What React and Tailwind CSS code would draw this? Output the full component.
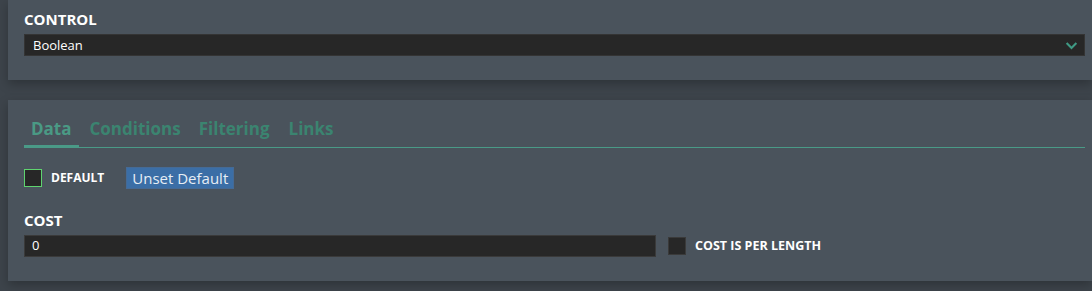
import React from "react";

function Checkbox({ active }) {
  return (
    <span
      className={
        "block w-[18px] h-[18px] bg-[#272727] border " +
        (active ? "border-[#5fd46f]" : "border-[#3a3a3a]")
      }
    ></span>
  );
}

function App() {
  return (
    <div
      className="h-[291px] w-[1092px] bg-[#3d444b] pl-2 overflow-hidden text-white"
      style={{ fontFamily: '"Open Sans", "Noto Sans", sans-serif' }}
    >
      <div className="h-[80px] bg-[#4a535c] pl-4 pr-[7px] pt-[9px] shadow-[0_4px_10px_rgba(0,0,0,0.25)]">
        <div className="text-[15px] font-bold leading-[20px]">CONTROL</div>
        <div className="mt-[5px] h-[22px] bg-[#272727] border border-[#343434] flex items-center justify-between pl-2 pr-[6px]">
          <span className="text-[13px] leading-none">Boolean</span>
          <svg className="w-[13px] h-[13px] text-[#3f9a84]" viewBox="0 0 16 16" fill="none" stroke="currentColor" strokeWidth="2.6">
            <path d="M2 5l6 6 6-6" />
          </svg>
        </div>
      </div>

      <div className="mt-5 h-[181px] bg-[#4a535c] pl-4 pr-[7px] pt-[16px] shadow-[0_4px_10px_rgba(0,0,0,0.25)]">
        <div className="flex border-b border-[#4a9a87]">
          <div className="px-[7px] pb-[3px] border-b-[3px] border-[#4a9a87] -mb-px text-[17px] font-bold text-[#4a9a85] leading-[26px]">
            Data
          </div>
          <div className="ml-[11px] pb-[3px] text-[17px] font-bold text-[#3b8470] leading-[26px]">Conditions</div>
          <div className="ml-[18px] pb-[3px] text-[17px] font-bold text-[#3b8470] leading-[26px]">Filtering</div>
          <div className="ml-[19px] pb-[3px] text-[17px] font-bold text-[#3b8470] leading-[26px]">Links</div>
        </div>

        <div className="mt-[19px] flex items-center">
          <Checkbox active />
          <span className="ml-[9px] text-[12px] font-bold">DEFAULT</span>
          <button className="ml-[22px] h-[22px] px-[5px] bg-[#3b6ea6] border border-[#456a95] text-[15px] text-[#e6edf5] leading-none">
            Unset Default
          </button>
        </div>

        <div className="mt-[21px] text-[15px] font-bold leading-[20px]">COST</div>
        <div className="mt-[5px] flex items-center">
          <div className="w-[632px] h-[22px] bg-[#272727] border border-[#3a3a3a] flex items-center pl-[7px] text-[13px]">
            0
          </div>
          <span className="ml-[12px]">
            <Checkbox />
          </span>
          <span className="ml-[9px] text-[12.5px] font-bold">COST IS PER LENGTH</span>
        </div>
      </div>
    </div>
  );
}

export default App;
